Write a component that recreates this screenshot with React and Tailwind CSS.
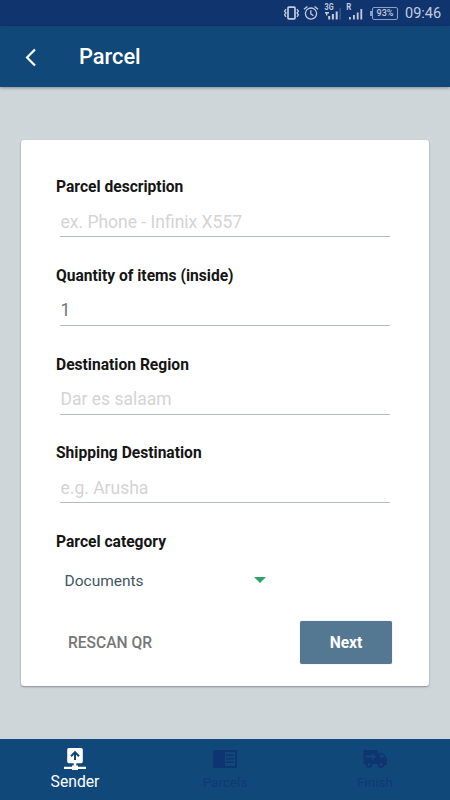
import React, { useState } from "react";

const fields = [
  { name: "description", label: "Parcel description", placeholder: "ex. Phone - Infinix X557" },
  { name: "quantity", label: "Quantity of items (inside)", value: "1" },
  { name: "region", label: "Destination Region", placeholder: "Dar es salaam" },
  { name: "destination", label: "Shipping Destination", placeholder: "e.g. Arusha" },
];

const StatusBar = () => (
  <div className="flex h-[26px] items-center bg-[#10346d] pl-[283px] text-[#c3cce0]">
    <svg width="17" height="16" viewBox="0 0 17 16" fill="none" stroke="currentColor">
      <rect x="5" y="2.2" width="7" height="11.6" rx="0.8" strokeWidth="1.7" />
      <path d="M3 4.2L1.6 6.2L3 8L1.6 9.8L3 11.8M14 4.2L15.4 6.2L14 8L15.4 9.8L14 11.8" strokeWidth="1.3" />
    </svg>
    <svg className="ml-[3px]" width="16" height="16" viewBox="0 0 16 16" fill="none" stroke="currentColor" strokeWidth="1.3">
      <circle cx="8" cy="8.6" r="5.6" />
      <path d="M7.8 5.3V9L10.4 10.6M1 4.3L4.4 1.5M15 4.3L11.6 1.5" />
    </svg>
    <svg className="ml-[5px]" width="19" height="20" viewBox="0 0 19 20" fill="currentColor">
      <text x="0.6" y="7" fontFamily="Roboto, sans-serif" fontSize="9" fontWeight="700" textLength="9" lengthAdjust="spacingAndGlyphs">3G</text>
      <path d="M1 9h4v1.4H3.4v2H2v-2H1zM4.2 13h2v3.5h-2zM7.9 11h2v5.5h-2zM11.7 8.5h2v8h-2z" />
      <path d="M15.6 5h1v11.5h-1z" opacity="0.35" />
    </svg>
    <svg className="ml-[3px]" width="20" height="20" viewBox="0 0 20 20" fill="currentColor">
      <text x="0.3" y="7" fontFamily="Roboto, sans-serif" fontSize="9" fontWeight="700" textLength="5" lengthAdjust="spacingAndGlyphs">R</text>
      <path d="M3 14h1.8v2.5H3zM7 12h1.8v4.5H7zM10.8 9.5h1.8v7h-1.8zM14.4 6h1.8v10.5h-1.8z" />
    </svg>
    <div className="ml-[4px] flex items-center">
      <span className="h-[5px] w-[2px] bg-[#8e9fc4]" />
      <span className="flex h-[13px] w-[26px] items-center justify-center rounded-[2px] border border-[#8e9fc4] text-[9px] font-medium leading-none">
        93%
      </span>
    </div>
    <span className="ml-[7px] mt-[3px] text-[14.5px] leading-none">09:46</span>
  </div>
);

const Field = ({ name, label, placeholder, value }) => (
  <div className="h-[88.8px]">
    <label htmlFor={name} className="block h-5 text-[15.6px] font-bold leading-5 text-[#151515]">
      {label}
    </label>
    <input
      id={name}
      name={name}
      defaultValue={value}
      placeholder={placeholder}
      className="ml-1 mt-[10px] block h-[30px] w-[330px] border-b border-[#b5babd] bg-transparent px-[0.5px] text-[17.5px] text-[#737373] outline-none placeholder:text-[#d4d4d4]"
    />
  </div>
);

const SenderIcon = () => (
  <svg width="24" height="24" viewBox="0 0 24 24" fill="currentColor">
    <path
      fillRule="evenodd"
      d="M5.8 1h12.4a1.6 1.6 0 0 1 1.6 1.6v12a1.6 1.6 0 0 1-1.6 1.6h-4.9v2.3H15v1.3h8V22h-8v1H9v-1H1v-2.2h8v-1.3h1.7v-2.3H5.800a1.6 1.6 0 0 1-1.6-1.6v-12A1.6 1.6 0 0 1 5.8 1zM12 3.8L7.300 8.500l1.400 1.400L11 7.700V13h2V7.700l2.300 2.200 1.400-1.400z"
    />
  </svg>
);

const ParcelsIcon = () => (
  <svg width="26" height="24" viewBox="0 0 26 24">
    <path d="M1 3h24v18H1z" fill="#0e3471" />
    <path d="M13 5h10v14H13z" fill="#10487a" />
    <path d="M14 7.5h8V9h-8zM14 11h8v1.5h-8zM14 14.5h8V16h-8z" fill="#0e3471" />
  </svg>
);

const FinishIcon = () => (
  <svg width="26" height="24" viewBox="0 0 26 24" fill="#0e3471">
    <path d="M2.500 3h13v14h-14V4a1 1 0 0 1 1-1zM15.500 6h5L25 11v7h-9.500z" />
    <path d="M18 7.500h2.300l2.500 3.300H18z" fill="#10487a" />
    <path d="M4 8.500h6V5.800l4 3.800-4 3.800v-2.800H4z" fill="#10487a" />
    <circle cx="7" cy="17.500" r="2.400" stroke="#0e3471" strokeWidth="2" fill="#10487a" />
    <circle cx="19" cy="17.500" r="2.400" stroke="#0e3471" strokeWidth="2" fill="#10487a" />
  </svg>
);

const tabs = [
  { label: "Sender", icon: SenderIcon },
  { label: "Parcels", icon: ParcelsIcon },
  { label: "Finish", icon: FinishIcon },
];

const App = () => {
  const [tab, setTab] = useState("Sender");

  return (
    <div className="flex h-[800px] w-[450px] flex-col overflow-hidden bg-[#ced6da] font-['Roboto',sans-serif]">
      <StatusBar />

      <header className="flex h-[61px] shrink-0 items-center bg-[#10487a] text-white shadow-[0_1px_3px_rgba(0,0,0,0.35)]">
        <button type="button" aria-label="Back" className="ml-6">
          <svg width="14" height="20" viewBox="0 0 14 20" fill="none" stroke="currentColor" strokeWidth="2.2">
            <path d="M11 2.5L3 10.5L11 18.5" />
          </svg>
        </button>
        <h1 className="ml-[41px] mt-[2px] text-[21.8px] font-medium">Parcel</h1>
      </header>

      <main className="flex-1 px-[21px] pt-[53px]">
        <form
          onSubmit={(e) => e.preventDefault()}
          className="h-[546px] rounded-[3px] bg-white pl-[35px] pr-9 pt-[37px] shadow-[0_1px_2px_rgba(0,0,0,0.35)]"
        >
          {fields.map((field) => (
            <Field key={field.name} {...field} />
          ))}

          <p className="h-5 text-[15.6px] font-bold leading-5 text-[#151515]">Parcel category</p>
          <button
            type="button"
            className="ml-[8.5px] mt-[18px] flex h-5 w-[201px] items-center justify-between text-[15.5px] text-[#43565e]"
          >
            <span className="pt-[2px]">Documents</span>
            <svg width="12" height="6" viewBox="0 0 12 6" fill="#2fa36b">
              <path d="M0 0h12L6 6z" />
            </svg>
          </button>

          <div className="mt-[31px] flex items-center justify-between pl-3 pr-[1px]">
            <button type="button" className="pt-[3px] text-[15.6px] font-medium text-[#777777]">
              RESCAN QR
            </button>
            <button
              type="submit"
              className="h-[43px] w-[92px] rounded-[2px] bg-[#557892] pt-[2px] text-[15.6px] font-bold text-white shadow-[0_0_1px_rgba(0,0,0,0.4)]"
            >
              Next
            </button>
          </div>
        </form>
      </main>

      <nav className="grid h-[61px] grid-cols-3 bg-[#10487a]">
        {tabs.map(({ label, icon: Icon }) => (
          <button
            key={label}
            type="button"
            onClick={() => setTab(label)}
            className="flex flex-col items-center pt-[8px] text-[13.5px] leading-5"
          >
            <span className="text-white">
              <Icon />
            </span>
            <span className={tab === label ? "mt-[1px] text-[15.7px] leading-5 text-white" : "mt-[1px] text-[#0e3a73]"}>
              {label}
            </span>
          </button>
        ))}
      </nav>
    </div>
  );
};

export default App;
